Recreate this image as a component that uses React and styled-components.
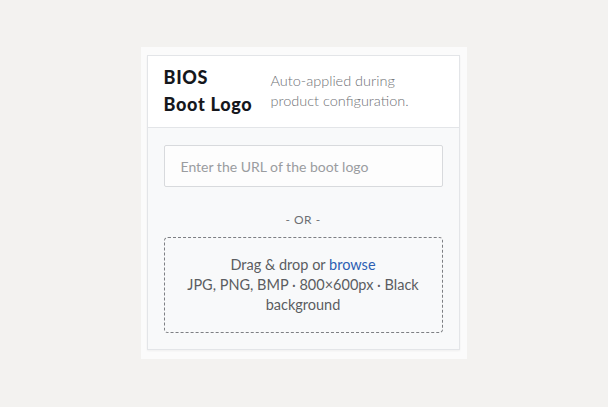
import React from 'react';
import styled, { createGlobalStyle } from 'styled-components';

const GlobalStyle = createGlobalStyle`
  body {
    margin: 0;
    background: #f3f2f0;
    font-family: 'Lato', 'Noto Sans', sans-serif;
  }
`;

const Page = styled.div`
  width: 608px;
  height: 407px;
  display: flex;
  justify-content: center;
  padding-top: 47px;
  padding-right: 1px;
  box-sizing: border-box;
`;

const Panel = styled.div`
  width: 326px;
  height: 312px;
  box-sizing: border-box;
  background: #fbfbfb;
  padding: 8px 7px 10px 6px;
`;

const Card = styled.div`
  border: 1px solid #e3e5e8;
  background: #f8f9fa;
  box-shadow: 0 1px 2px rgba(0, 0, 0, 0.05);
`;

const Header = styled.div`
  display: flex;
  align-items: flex-start;
  background: #fff;
  border-bottom: 1px solid #e3e5e8;
  height: 72px;
  padding: 8px 16px 0 16px;
  box-sizing: border-box;
`;

const Title = styled.h2`
  margin: 0;
  width: 107px;
  flex-shrink: 0;
  font-size: 18px;
  line-height: 27px;
  font-weight: 900;
  color: #15171c;
  letter-spacing: 0.7px;
`;

const Subtitle = styled.p`
  margin: 7px 0 0;
  font-size: 14.5px;
  line-height: 20px;
  color: #707276;
  font-weight: 300;
`;

const Body = styled.div`
  padding: 17px 16px 16px;
  display: flex;
  flex-direction: column;
`;

const UrlInput = styled.input`
  height: 42px;
  box-sizing: border-box;
  border: 1px solid #d8dadd;
  border-radius: 2px;
  background: #fdfdfd;
  padding: 0 16px;
  font-family: inherit;
  font-size: 14px;
  color: #333;
  outline: none;
  &::placeholder {
    color: #9a9ca0;
  }
`;

const Divider = styled.div`
  text-align: center;
  font-size: 12px;
  color: #6d6f73;
  letter-spacing: 0.5px;
  margin: 25px 0 9px;
  line-height: 16px;
`;

const DropZone = styled.div`
  height: 96px;
  box-sizing: border-box;
  border: 1.5px dashed #7d7f83;
  border-radius: 4px;
  display: flex;
  flex-direction: column;
  justify-content: center;
  align-items: center;
  text-align: center;
  padding: 0 12px;
  font-size: 14.5px;
  line-height: 20px;
  color: #5b5d61;
`;

const Browse = styled.a`
  color: #2c5fb3;
  text-decoration: none;
  cursor: pointer;
`;

export default function App() {
  return (
    <>
      <GlobalStyle />
      <Page>
        <Panel>
          <Card>
            <Header>
              <Title>
                BIOS
                <br />
                Boot Logo
              </Title>
              <Subtitle>
                Auto-applied during
                <br />
                product configuration.
              </Subtitle>
            </Header>
            <Body>
              <UrlInput placeholder="Enter the URL of the boot logo" />
              <Divider>- OR -</Divider>
              <DropZone>
                <div>
                  Drag &amp; drop or <Browse>browse</Browse>
                </div>
                <div>JPG, PNG, BMP · 800×600px · Black background</div>
              </DropZone>
            </Body>
          </Card>
        </Panel>
      </Page>
    </>
  );
}
